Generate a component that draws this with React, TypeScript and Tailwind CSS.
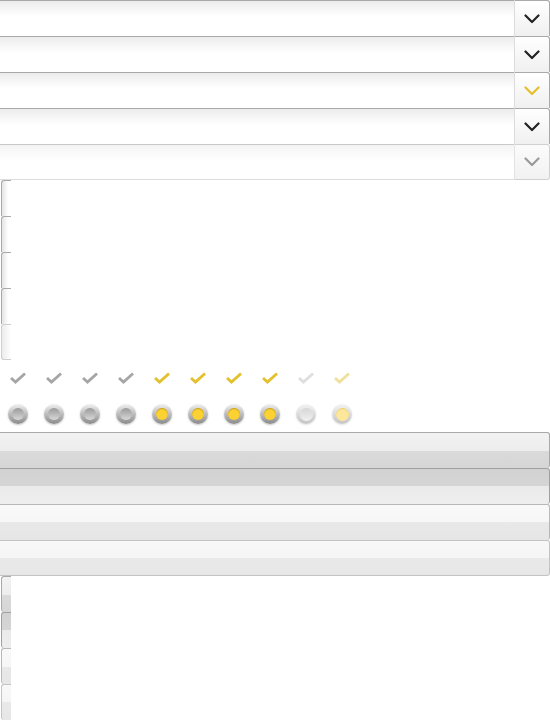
import React from "react";

type Tone = "dark" | "gold" | "muted";

const chevronColor: Record<Tone, string> = {
  dark: "#222222",
  gold: "#e2c02c",
  muted: "#9a9a9a",
};

function Chevron({ tone }: { tone: Tone }) {
  return (
    <svg width="16" height="10" viewBox="0 0 16 10" fill="none">
      <path d="M1.5 1.5 L8 8 L14.5 1.5" stroke={chevronColor[tone]} strokeWidth="2.2" strokeLinecap="round" strokeLinejoin="round" />
    </svg>
  );
}

function SelectBar({ tone, faded }: { tone: Tone; faded?: boolean }) {
  return (
    <div className="flex h-9 w-[550px] shrink-0">
      <div
        className={
          faded
            ? "flex-1 border-t border-b border-t-[#c8c8c8] border-b-[#dddddd] bg-[linear-gradient(#f4f4f4,#ffffff_45%)]"
            : "flex-1 border-t border-[#a9a9a9] bg-[linear-gradient(#ececec,#ffffff_45%)]"
        }
      />
      <div
        className={
          faded
            ? "w-[36px] flex items-center justify-center border border-l-[#e2e2e2] border-[#d0d0d0] rounded-r-[3px] bg-[linear-gradient(#fbfbfb,#f2f2f2)]"
            : "w-[36px] flex items-center justify-center border-t border-r border-l border-t-[#a9a9a9] border-r-[#a9a9a9] border-l-[#dcdcdc] rounded-tr-[3px] bg-[linear-gradient(#ffffff,#f0f0f0)]"
        }
      >
        <Chevron tone={tone} />
      </div>
    </div>
  );
}

function Nub({ faded }: { faded?: boolean }) {
  return (
    <div
      className={
        faded
          ? "h-9 w-[10px] ml-px border-l border-t border-b border-[#cfcfcf] rounded-l-[3px] bg-[linear-gradient(to_right,#ececec,#ffffff)]"
          : "h-9 w-[10px] ml-px border-l border-t border-[#a9a9a9] rounded-tl-[3px] bg-[linear-gradient(to_right,#e4e4e4,#ffffff_70%)]"
      }
    />
  );
}

const checkColors = [
  "#a6a6a6", "#a6a6a6", "#a6a6a6", "#a6a6a6",
  "#e3c12e", "#e3c12e", "#e3c12e", "#e3c12e",
  "#dedede", "#f1e09a",
];

function Check({ color }: { color: string }) {
  return (
    <div className="w-9 h-9 flex items-center justify-center">
      <svg width="18" height="14" viewBox="0 0 18 14" fill="none">
        <path d="M2 7 L6.5 11 L16 2.5" stroke={color} strokeWidth="2.9" strokeLinejoin="miter" />
      </svg>
    </div>
  );
}

const radioKinds = ["gray", "gray", "gray", "gray", "gold", "gold", "gold", "gold", "light", "paleGold"] as const;

function Radio({ kind }: { kind: (typeof radioKinds)[number] }) {
  const outer =
    kind === "light" || kind === "paleGold"
      ? "bg-[linear-gradient(#f4f4f4,#c4c4c4)] shadow-[0_1px_2px_rgba(0,0,0,0.12)]"
      : "bg-[linear-gradient(#f0f0f0,#8a8a8a)] shadow-[0_1px_2px_rgba(0,0,0,0.25)]";
  const inner =
    kind === "gray"
      ? "w-[12px] h-[12px] bg-[linear-gradient(#9a9a9a,#d8d8d8)]"
      : kind === "gold"
      ? "w-[12px] h-[12px] bg-[#fcd232] shadow-[inset_0_1px_1px_rgba(150,110,0,0.5)]"
      : kind === "light"
      ? "w-[13px] h-[13px] bg-[linear-gradient(#d6d6d6,#f0f0f0)]"
      : "w-[13px] h-[13px] bg-[#fde79a] shadow-[inset_0_1px_1px_rgba(200,160,40,0.3)]";
  return (
    <div className="w-9 h-9 flex items-center justify-center">
      <div className={`w-[20px] h-[20px] rounded-full flex items-center justify-center ${outer}`}>
        <div className={`rounded-full ${inner}`} />
      </div>
    </div>
  );
}

const buttonStyles = [
  "border-[#a9a9a9] bg-[linear-gradient(#f2f2f2,#ededed_50%,#dadada_50%,#d6d6d6)]",
  "border-[#a0a0a0] bg-[linear-gradient(#d2d2d2,#d5d5d5_50%,#eaeaea_50%,#eeeeee)]",
  "border-[#b8b8b8] bg-[linear-gradient(#f9f9f9,#f6f6f6_50%,#e8e8e8_50%,#e6e6e6)]",
  "border-[#c4c4c4] bg-[linear-gradient(#f8f8f8,#f5f5f5_50%,#e9e9e9_50%,#e7e7e7)]",
];

export default function App() {
  return (
    <div className="w-[550px] h-[720px] bg-white overflow-hidden flex flex-col">
      {/* select bars */}
      <SelectBar tone="dark" />
      <SelectBar tone="dark" />
      <SelectBar tone="gold" />
      <SelectBar tone="dark" />
      <SelectBar tone="muted" faded />

      {/* select nubs */}
      <Nub />
      <Nub />
      <Nub />
      <Nub />
      <Nub faded />

      {/* checks */}
      <div className="flex h-9">
        {checkColors.map((c, i) => (
          <Check key={i} color={c} />
        ))}
      </div>

      {/* radios */}
      <div className="flex h-9">
        {radioKinds.map((k, i) => (
          <Radio key={i} kind={k} />
        ))}
      </div>

      {/* buttons */}
      {buttonStyles.map((s, i) => (
        <div
          key={i}
          className={`h-9 w-[550px] shrink-0 border-t border-r rounded-r-[3px] ${s} ${i === 3 ? "border-b" : ""}`}
        />
      ))}

      {/* button nubs */}
      {buttonStyles.map((s, i) => (
        <div key={i} className={`h-9 w-[10px] ml-px shrink-0 border-l border-t rounded-l-[3px] ${s}`} />
      ))}
    </div>
  );
}
